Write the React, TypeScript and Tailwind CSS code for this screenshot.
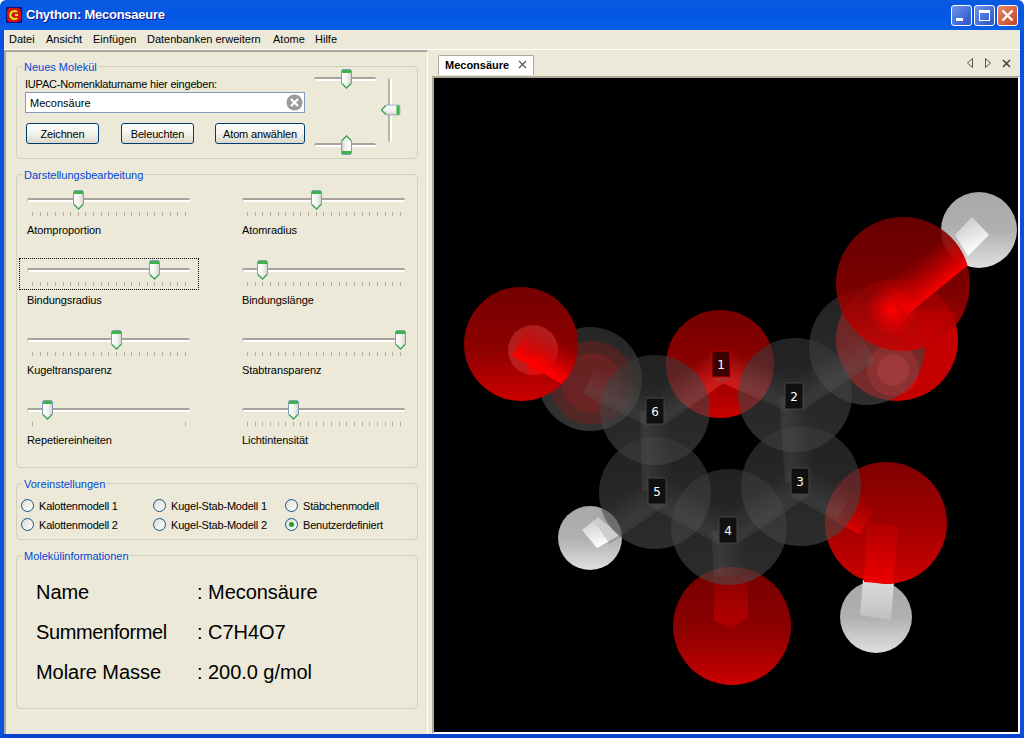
import React from "react";

const UI = "font-['Liberation_Sans',sans-serif] text-[11px] leading-[14px]";

function Thumb({ className = "" }: { className?: string }) {
  return (
    <svg width="11" height="20" viewBox="0 0 11 20" className={className}>
      <defs>
        <linearGradient id="thumbBody" x1="0" y1="0" x2="1" y2="0">
          <stop offset="0" stopColor="#ffffff" />
          <stop offset="0.6" stopColor="#f1f1ec" />
          <stop offset="1" stopColor="#cfcfc6" />
        </linearGradient>
      </defs>
      <path d="M0.5 2 L1.5 0.5 L9.5 0.5 L10.5 2 L10.5 14.5 L5.5 19.5 L0.5 14.5 Z" fill="url(#thumbBody)" stroke="#7f9db9" strokeWidth="1" />
      <rect x="1" y="1" width="9" height="3" fill="#3cb44a" />
      <path d="M1 14.5 L5.5 19 L10 14.5" fill="none" stroke="#44a858" strokeWidth="1.4" />
    </svg>
  );
}

function Track({ className = "" }: { className?: string }) {
  return <div className={`rounded-[2px] border-t-2 border-t-[#a5a39c] border-l border-l-[#bdbbb2] bg-white ${className}`} />;
}

function Slider({ label, value, ticks = 21, focused = false }: { label: string; value: number; ticks?: number; focused?: boolean }) {
  return (
    <div className="flex flex-col">
      <div className={`relative h-[32px] w-[180px] px-[7px] pt-[9px] border border-dotted ${focused ? "border-black" : "border-transparent"}`}>
        <Track className="h-[4px] w-[163px]" />
        <div className="absolute top-[1px]" style={{ left: value + 2 }}>
          <Thumb />
        </div>
        <div className="mt-[10px] ml-[5px] flex h-[4px] w-[154px] justify-between">
          {Array.from({ length: ticks }, (_, i) => (
            <span key={i} className="h-[4px] w-px bg-[#b0ae9f]" />
          ))}
        </div>
      </div>
      <div className="mt-[3px] pl-[8px] tracking-[-0.08px] text-black">{label}</div>
    </div>
  );
}

function Group({ title, className = "", children }: { title: string; className?: string; children: React.ReactNode }) {
  return (
    <fieldset className={`rounded-[4px] border border-[#d0d0bf] ${className}`}>
      <legend className="ml-[6px] h-[14px] px-[1px] leading-[16px] text-[#0046d5]">{title}</legend>
      {children}
    </fieldset>
  );
}

function Radio({ label, checked = false }: { label: string; checked?: boolean }) {
  return (
    <div className="flex h-[19px] items-center gap-[5px]">
      <div className="flex h-[13px] w-[13px] items-center justify-center rounded-full border border-[#1c5180] bg-gradient-to-br from-[#dcdcd6] to-white">
        {checked && <div className="h-[5px] w-[5px] rounded-full bg-[#21a121]" />}
      </div>
      <span className="tracking-[-0.2px] text-black">{label}</span>
    </div>
  );
}

function Btn({ label, w }: { label: string; w: string }) {
  return (
    <button className={`h-[21px] ${w} rounded-[3px] border border-[#003c74] bg-gradient-to-b from-white via-[#f3f2ec] to-[#dcd8cc] tracking-[-0.15px] text-black`}>
      {label}
    </button>
  );
}

function InfoRow({ k, v, keyClass = "" }: { k: string; v: string; keyClass?: string }) {
  return (
    <div className="flex h-[40px] items-center text-[20px] tracking-[-0.05px] text-black">
      <span className={`w-[161px] ${keyClass}`}>{k}</span>
      <span>: {v}</span>
    </div>
  );
}

type B = [number, number, number, number, number];

function Band({ id, b, c0, c1, c2, op = 1, clip }: { id: string; b: B; c0: string; c1: string; c2: string; op?: number; clip?: string }) {
  const [x1, y1, x2, y2, w] = b;
  const dx = x2 - x1, dy = y2 - y1;
  const l = Math.hypot(dx, dy);
  let nx = (-dy / l) * (w / 2), ny = (dx / l) * (w / 2);
  if (ny > 0) { nx = -nx; ny = -ny; }
  return (
    <g opacity={op} clipPath={clip ? `url(#${clip})` : undefined}>
      <linearGradient id={id} gradientUnits="userSpaceOnUse" x1={x1 + nx} y1={y1 + ny} x2={x1 - nx} y2={y1 - ny}>
        <stop offset="0" stopColor={c0} />
        <stop offset="0.8" stopColor={c1} />
        <stop offset="1" stopColor={c2} />
      </linearGradient>
      <polygon
        points={`${x1 + nx},${y1 + ny} ${x2 + nx},${y2 + ny} ${x2 - nx},${y2 - ny} ${x1 - nx},${y1 - ny}`}
        fill={`url(#${id})`}
      />
    </g>
  );
}

function Label({ n, x, y, red = false }: { n: string; x: number; y: number; red?: boolean }) {
  return (
    <g>
      <rect x={x - 9} y={y - 13} width="18" height="26" fill={red ? "#3d0000" : "#101010"} stroke={red ? "#c00000" : "#444444"} />
      <text x={x} y={y + 4.5} textAnchor="middle" fontSize="12" fill="#ffffff" fontFamily="'DejaVu Sans', sans-serif">{n}</text>
    </g>
  );
}

function Molecule() {
  const grayBands: B[] = [
    [655, 411, 721, 364, 34],
    [721, 364, 794, 396, 34],
    [794, 396, 800, 481, 30],
    [800, 481, 728, 530, 34],
    [728, 530, 657, 491, 34],
    [657, 491, 655, 411, 30],
    [655, 411, 590, 379, 34],
    [794, 396, 867, 347, 34],
    [657, 491, 600, 530, 34],
    [728, 530, 731, 575, 34],
    [800, 481, 845, 507, 34],
  ];
  const carbons: [number, number, number][] = [
    [655, 410, 55],
    [795, 395, 57],
    [801, 486, 60],
    [655, 493, 56],
    [729, 527, 58],
  ];
  return (
    <svg viewBox="434 78 584 654" className="block h-full w-full">
      <defs>
        <linearGradient id="red" x1="0" y1="0" x2="0" y2="1">
          <stop offset="0" stopColor="#750000" />
          <stop offset="0.55" stopColor="#8e0000" />
          <stop offset="1" stopColor="#cc0000" />
        </linearGradient>
        <linearGradient id="redFlat" x1="0" y1="0" x2="0" y2="1">
          <stop offset="0" stopColor="#800000" />
          <stop offset="0.5" stopColor="#a00000" />
          <stop offset="1" stopColor="#d00000" />
        </linearGradient>
        <linearGradient id="hv" x1="0" y1="0" x2="0" y2="1">
          <stop offset="0" stopColor="#a8a8a8" />
          <stop offset="0.5" stopColor="#b0b0b0" />
          <stop offset="1" stopColor="#e0e0e0" />
        </linearGradient>
        <linearGradient id="carbon" x1="0" y1="0" x2="0" y2="1">
          <stop offset="0" stopColor="#383838" />
          <stop offset="1" stopColor="#4a4a4a" />
        </linearGradient>
        <linearGradient id="upRed" x1="0" y1="0" x2="0" y2="1">
          <stop offset="0" stopColor="#b00000" />
          <stop offset="1" stopColor="#ee0000" />
        </linearGradient>
        <linearGradient id="downRed" x1="0" y1="0" x2="0" y2="1">
          <stop offset="0" stopColor="#8a0000" />
          <stop offset="0.8" stopColor="#b00000" />
          <stop offset="1" stopColor="#a00000" />
        </linearGradient>
        <linearGradient id="upGray" x1="0" y1="0" x2="0" y2="1">
          <stop offset="0" stopColor="#dcdcdc" />
          <stop offset="1" stopColor="#c0c0c0" />
        </linearGradient>
        <linearGradient id="hWhite" x1="0" y1="0" x2="0.4" y2="1">
          <stop offset="0" stopColor="#c4c4c4" />
          <stop offset="1" stopColor="#ffffff" />
        </linearGradient>
        <radialGradient id="hot" cx="0.5" cy="0.5" r="0.5">
          <stop offset="0" stopColor="#ff0000" />
          <stop offset="1" stopColor="#ff0000" stopOpacity="0" />
        </radialGradient>
        <clipPath id="cO1"><circle cx="720" cy="364" r="54" /></clipPath>
        <clipPath id="cOL"><circle cx="521" cy="344" r="57" /></clipPath>
        <clipPath id="cOT"><circle cx="903" cy="284" r="67" /></clipPath>
        <clipPath id="cOR"><circle cx="886" cy="523" r="61" /></clipPath>
      </defs>
      <rect x="434" y="78" width="584" height="654" fill="#000" />

      {/* hydrogens */}
      <circle cx="979" cy="230" r="38" fill="url(#hv)" />
      <circle cx="590" cy="538" r="32" fill="url(#hv)" />
      <circle cx="876" cy="617" r="36" fill="url(#hv)" />
      <polygon points="972,217 989,235 968,256 955,235" fill="url(#hWhite)" />
      <polygon points="582,530 598,517 620,535 597,548" fill="url(#hWhite)" />
      <polygon points="863,580 894,582 891,620 860,615" fill="url(#upGray)" />

      {/* oxygens behind the carbons */}
      <circle cx="732" cy="626" r="59" fill="url(#red)" />
      <circle cx="886" cy="523" r="61" fill="url(#redFlat)" />
      <circle cx="720" cy="364" r="54" fill="url(#red)" />
      <circle cx="897" cy="340" r="61" fill="#c40000" />
      <polygon points="714,575 748,575 748,618 731,630 714,620" fill="url(#downRed)" />
      <Band id="rl" b={[800, 481, 868, 520, 34]} c0="#c0000000" c1="#c80000" c2="#e00000" clip="cOR" />
      <polygon points="867,523 898,526 893,584 864,582" fill="url(#upRed)" />
      <Band id="r1" b={[655, 411, 721, 364, 34]} c0="#c0000000" c1="#e80000" c2="#ff0000" clip="cO1" />
      <Band id="r2" b={[721, 364, 794, 396, 34]} c0="#c0000000" c1="#e80000" c2="#ff0000" clip="cO1" />

      {/* carbons */}
      <circle cx="590" cy="379" r="52" fill="url(#carbon)" opacity="0.68" />
      <circle cx="592" cy="383" r="42" fill="#8c1c1c" opacity="0.4" />
      <circle cx="592" cy="383" r="30" fill="#982020" opacity="0.35" />
      <circle cx="867" cy="347" r="58" fill="url(#carbon)" opacity="0.62" />
      <circle cx="893" cy="370" r="26" fill="#c04040" opacity="0.3" />
      <circle cx="893" cy="370" r="16" fill="#c85050" opacity="0.3" />
      {carbons.map(([x, y, r], i) => (
        <circle key={i} cx={x} cy={y} r={r} fill="url(#carbon)" opacity="0.6" />
      ))}
      {grayBands.map((b, i) => (
        <Band key={i} id={`k${i}`} b={b} c0="#66666600" c1="#686868" c2="#585858" op={0.26} />
      ))}

      {/* oxygens in front */}
      <circle cx="521" cy="344" r="57" fill="url(#red)" />
      <circle cx="533" cy="350" r="25" fill="#c82828" opacity="0.7" />
      <Band id="ol" b={[590, 379, 521, 340, 36]} c0="#c0000000" c1="#f00000" c2="#ff0000" clip="cOL" />
      <circle cx="536" cy="366" r="14" fill="url(#hot)" />
      <circle cx="903" cy="284" r="67" fill="url(#red)" opacity="0.88" />
      <Band id="ob" b={[975, 235, 895, 300, 38]} c0="#c0000000" c1="#d80000" c2="#f80000" clip="cOT" />
      <polygon points="905,310 885,330 915,350 958,312" fill="#d00000" opacity="0.35" clipPath="url(#cOT)" />
      <circle cx="892" cy="310" r="26" fill="url(#hot)" />

      <Label n="1" x={721} y={364} red />
      <Label n="2" x={794} y={396} />
      <Label n="6" x={655} y={411} />
      <Label n="5" x={657} y={491} />
      <Label n="3" x={800} y={481} />
      <Label n="4" x={728} y={530} />
    </svg>
  );
}

export default function App() {
  return (
    <div className={`flex h-[738px] w-[1024px] flex-col overflow-hidden ${UI}`}>
      {/* title bar */}
      <div className="flex h-[30px] shrink-0 items-center rounded-t-[6px] bg-gradient-to-b from-[#0a5ae0] via-[#0258e4] to-[#0a5fe9] pl-[6px] pr-[6px]">
        <svg width="16" height="16" viewBox="0 0 16 16">
          <rect width="16" height="16" fill="#10107a" />
          <rect x="1" y="1" width="14" height="14" rx="4" fill="#d81010" />
          <path d="M11 5 A4 4 0 1 0 11 11" fill="none" stroke="#d4e820" strokeWidth="2.2" />
          <rect x="9" y="7" width="3" height="2" fill="#d4e820" />
        </svg>
        <span className="ml-[4px] font-['Liberation_Sans',sans-serif] text-[13px] font-bold tracking-[-0.25px] text-white [text-shadow:1px_1px_#0f1089]">Chython: Meconsaeure</span>
        <div className="ml-auto flex gap-[2px]">
          <div className="relative h-[21px] w-[21px] rounded-[3px] border border-white bg-gradient-to-br from-[#6f95ea] to-[#2a50c8]">
            <div className="absolute bottom-[4px] left-[4px] h-[3px] w-[7px] bg-white" />
          </div>
          <div className="flex h-[21px] w-[21px] items-center justify-center rounded-[3px] border border-white bg-gradient-to-br from-[#6f95ea] to-[#2a50c8]">
            <div className="h-[11px] w-[11px] border border-t-[3px] border-white" />
          </div>
          <div className="flex h-[21px] w-[21px] items-center justify-center rounded-[3px] border border-white bg-gradient-to-br from-[#e88a6c] to-[#c3401c]">
            <svg width="13" height="13" viewBox="0 0 13 13">
              <path d="M1.5 1.5 L11.5 11.5 M11.5 1.5 L1.5 11.5" stroke="#fff" strokeWidth="2.4" />
            </svg>
          </div>
        </div>
      </div>

      {/* window content */}
      <div className="flex min-h-0 flex-1 flex-col border-x-4 border-b-4 border-x-[#0a50e0] border-b-[#0742cf] bg-[#ece9d8]">
        <div className="flex h-[20px] shrink-0 items-center gap-[12px] whitespace-nowrap border-b border-white pl-[5px] pb-[1px] text-black">
          <span className="w-[25px]">Datei</span>
          <span className="w-[35px]">Ansicht</span>
          <span className="w-[42px]">Einfügen</span>
          <span className="w-[114px]">Datenbanken erweitern</span>
          <span className="w-[30px]">Atome</span>
          <span>Hilfe</span>
        </div>
        <div className="flex min-h-0 flex-1">
          {/* left panel */}
          <div className="flex w-[424px] shrink-0 flex-col gap-[8px] border-l-2 border-t-2 border-r border-l-[#aca899] border-t-[#aca899] border-r-white pl-[10px] pr-[9px] pt-[7px]">
            <Group title="Neues Molekül" className="h-[100px]">
              <div className="flex pl-[8px] pt-[4px]">
                <div className="flex w-[280px] flex-col">
                  <div className="h-[14px] tracking-[-0.2px] text-black">IUPAC-Nomenklaturname hier eingeben:</div>
                  <div className="mt-[1px] flex h-[21px] items-center justify-between border border-[#7f9db9] bg-white pl-[4px] pr-[1px] text-black">
                    <span>Meconsäure</span>
                    <svg width="17" height="17" viewBox="0 0 17 17">
                      <circle cx="8.5" cy="8.5" r="8" fill="#9c9c9c" />
                      <path d="M5 5 L12 12 M12 5 L5 12" stroke="#fff" strokeWidth="2.2" />
                    </svg>
                  </div>
                  <div className="mt-[10px] flex justify-between pl-[1px]">
                    <Btn label="Zeichnen" w="w-[73px]" />
                    <div className="ml-[1px]"><Btn label="Beleuchten" w="w-[73px]" /></div>
                    <Btn label="Atom anwählen" w="w-[90px]" />
                  </div>
                </div>
                <div className="ml-[9px] -mt-[8px] flex h-[86px] w-[62px] flex-col justify-between">
                  <div className="relative h-[20px]">
                    <Track className="mt-[8px] h-[4px] w-[62px]" />
                    <div className="absolute left-[27px] top-0"><Thumb /></div>
                  </div>
                  <div className="relative h-[20px]">
                    <Track className="mt-[8px] h-[4px] w-[62px]" />
                    <div className="absolute left-[27px] top-0"><Thumb className="rotate-180" /></div>
                  </div>
                </div>
                <div className="relative ml-[12px] mt-[1px] h-[64px] w-[4px] rounded-[2px] border-l-2 border-l-[#b5b3aa] bg-white">
                  <div className="absolute -left-[5px] top-[22px]"><Thumb className="rotate-90" /></div>
                </div>
              </div>
            </Group>

            <Group title="Darstellungsbearbeitung" className="h-[301px]">
              <div className="grid grid-cols-[215px_1fr] auto-rows-[70px] pl-[2px] pt-[7px]">
                <Slider label="Atomproportion" value={51} />
                <Slider label="Atomradius" value={74} />
                <Slider label="Bindungsradius" value={127} focused />
                <Slider label="Bindungslänge" value={20} />
                <Slider label="Kugeltransparenz" value={89} />
                <Slider label="Stabtransparenz" value={158} />
                <Slider label="Repetiereinheiten" value={20} ticks={2} />
                <Slider label="Lichtintensität" value={51} />
              </div>
            </Group>

            <Group title="Voreinstellungen" className="h-[64px]">
              <div className="grid grid-cols-[132px_132px_1fr] pl-[4px] pt-[6px]">
                <Radio label="Kalottenmodell 1" />
                <Radio label="Kugel-Stab-Modell 1" />
                <Radio label="Stäbchenmodell" />
                <Radio label="Kalottenmodell 2" />
                <Radio label="Kugel-Stab-Modell 2" />
                <Radio label="Benutzerdefiniert" checked />
              </div>
            </Group>

            <Group title="Molekülinformationen" className="h-[161px]">
              <div className="pl-[19px] pt-[10px] font-['Liberation_Sans',sans-serif]">
                <InfoRow k="Name" v="Meconsäure" />
                <InfoRow k="Summenformel" v="C7H4O7" keyClass="tracking-[-0.4px]" />
                <InfoRow k="Molare Masse" v="200.0 g/mol" />
              </div>
            </Group>
          </div>

          {/* right panel */}
          <div className="flex min-w-0 flex-1 flex-col">
            <div className="flex h-[26px] shrink-0 items-end pl-[10px]">
              <div className="mb-[1px] flex h-[20px] w-[96px] items-center gap-[9px] rounded-t-[2px] border-x border-t border-[#aca899] bg-white pb-[2px] pl-[6px]">
                <span className="font-bold text-black">Meconsäure</span>
                <svg width="9" height="9" viewBox="0 0 9 9"><path d="M1 1 L8 8 M8 1 L1 8" stroke="#555" strokeWidth="1.2" /></svg>
              </div>
              <div className="ml-auto mb-[8px] mr-[9px] flex items-center gap-[10px]">
                <svg width="8" height="10" viewBox="0 0 8 10"><path d="M6.5 0.5 L6.5 9.5 L1.5 5 Z" fill="none" stroke="#555" strokeWidth="1" /></svg>
                <svg width="8" height="10" viewBox="0 0 8 10"><path d="M1.5 0.5 L1.5 9.5 L6.5 5 Z" fill="none" stroke="#555" strokeWidth="1" /></svg>
                <svg width="9" height="9" viewBox="0 0 9 9"><path d="M1 1 L8 8 M8 1 L1 8" stroke="#444" strokeWidth="1.6" /></svg>
              </div>
            </div>
            <div className="ml-[4px] min-h-0 flex-1 border-2 border-l-[#aca899] border-t-[#aca899] border-b-white border-r-white">
              <Molecule />
            </div>
          </div>
        </div>
      </div>
    </div>
  );
}
